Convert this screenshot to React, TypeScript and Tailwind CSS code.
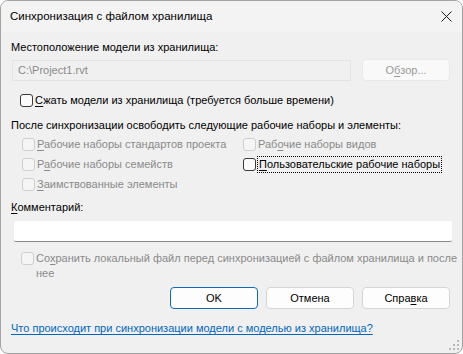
import React from "react";

type BoxProps = {
    checked?: boolean;
    disabled?: boolean;
};

function CheckBox({ disabled }: BoxProps) {
    return (
        <span
            className={`inline-block w-[13px] h-[13px] shrink-0 rounded-[3px] border ${disabled ? "border-[#cfcfcf] bg-[#f5f5f5]" : "border-[#3a3a3a] bg-[#fbfbfb]"}`}
        ></span>
    );
}

function U({ children }: { children: React.ReactNode }) {
    return <span className="underline underline-offset-2">{children}</span>;
}

function Option({ disabled, children, focused }: { disabled?: boolean; children: React.ReactNode; focused?: boolean }) {
    return (
        <div className="flex items-center gap-[2px] h-[20px] whitespace-nowrap">
            <CheckBox disabled={disabled} />
            <span
                className={`leading-[15px] ${disabled ? "text-[#8a8a8a]" : "text-black"} ${focused ? "outline outline-1 outline-dotted outline-black px-[1px]" : ""}`}
            >
                {children}
            </span>
        </div>
    );
}

function Button({ children, primary, disabled }: { children: React.ReactNode; primary?: boolean; disabled?: boolean }) {
    return (
        <div
            className={`w-[88px] h-[22px] flex items-center justify-center rounded-[4px] border ${primary ? "border-[#0f6cbd] bg-[#fdfdfd]" : disabled ? "border-[#e9e9e9] bg-[#f9f9f9] text-[#9a9a9a]" : "border-[#d5d5d5] bg-[#fdfdfd]"}`}
        >
            {children}
        </div>
    );
}

function Grip() {
    const dots = [
        [8, 0], [8, 4], [4, 4], [8, 8], [4, 8], [0, 8],
    ];
    return (
        <svg width="11" height="11" viewBox="0 0 11 11" className="absolute right-[2px] bottom-[2px]">
            {dots.map(([x, y]) => (
                <rect key={`${x}-${y}`} x={x} y={y} width="2" height="2" fill="#b8b8b8" />
            ))}
        </svg>
    );
}

export default function App() {
    return (
        <div className="w-[463px] h-[354px] bg-white" style={{ fontFamily: '"Liberation Sans", Arial, sans-serif' }}>
            <div className="relative w-[463px] h-[354px] rounded-[8px] border border-[#a3a3a3] bg-[#f0f0f0] overflow-hidden text-[11px] text-black">
                {/* title bar */}
                <div className="h-[31px] bg-[#f3f3f3] flex items-center justify-between pl-[9px] pr-[10px]">
                    <span className="text-[11.5px]">Синхронизация с файлом хранилища</span>
                    <svg width="11" height="11" viewBox="0 0 11 11">
                        <path d="M0.5 0.5 L10.5 10.5 M10.5 0.5 L0.5 10.5" stroke="#1a1a1a" strokeWidth="1" />
                    </svg>
                </div>

                <div className="pl-[10px] pr-[12px]">
                    <div className="mt-[7px] leading-[16px]">Местоположение модели из хранилища:</div>

                    <div className="mt-[4px] flex items-center justify-between">
                        <div className="w-[339px] h-[21px] ml-[1px] border border-[#e3e3e3] bg-[#f0f0f0] flex items-center pl-[5px] text-[#8a8a8a]">
                            C:\Project1.rvt
                        </div>
                        <Button disabled>
                            О<U>б</U>зор...
                        </Button>
                    </div>

                    <div className="mt-[9px] pl-[9px]">
                        <Option>
                            <U>С</U>жать модели из хранилища (требуется больше времени)
                        </Option>
                    </div>

                    <div className="mt-[7px] leading-[16px] whitespace-nowrap">После синхронизации освободить следующие рабочие наборы и элементы:</div>

                    <div className="mt-[1px] pl-[11px] grid grid-cols-[221px_1fr]">
                        <Option disabled>
                            <U>Р</U>абочие наборы стандартов проекта
                        </Option>
                        <Option disabled>
                            Раб<U>о</U>чие наборы видов
                        </Option>
                        <Option disabled>
                            Р<U>а</U>бочие наборы семейств
                        </Option>
                        <Option focused>
                            <U>П</U>ользовательские рабочие наборы
                        </Option>
                        <Option disabled>
                            <U>З</U>аимствованные элементы
                        </Option>
                    </div>

                    <div className="mt-[5px] leading-[16px]">
                        <U>К</U>омментарий:
                    </div>

                    <div className="mt-[6px] ml-[3px] w-[438px] h-[21px] bg-white border-b border-[#8a8a8a] rounded-[2px]"></div>

                    <div className="mt-[9px] pl-[10px] flex items-start gap-[2px] text-[#8a8a8a]">
                        <span className="mt-[1px]">
                            <CheckBox disabled />
                        </span>
                        <span className="leading-[15px] w-[424px] shrink-0">
                            Со<U>х</U>ранить локальный файл перед синхронизацией с файлом хранилища и после нее
                        </span>
                    </div>

                    <div className="mt-[6px] flex justify-end gap-[8px]">
                        <Button primary>OK</Button>
                        <Button>Отмена</Button>
                        <Button>
                            Спра<U>в</U>ка
                        </Button>
                    </div>

                    <div className="mt-[11px] whitespace-nowrap">
                        <span className="text-[#0067c0] underline underline-offset-2">
                            Что происходит при синхронизации модели с моделью из хранилища?
                        </span>
                    </div>
                </div>

                <Grip />
            </div>
        </div>
    );
}
